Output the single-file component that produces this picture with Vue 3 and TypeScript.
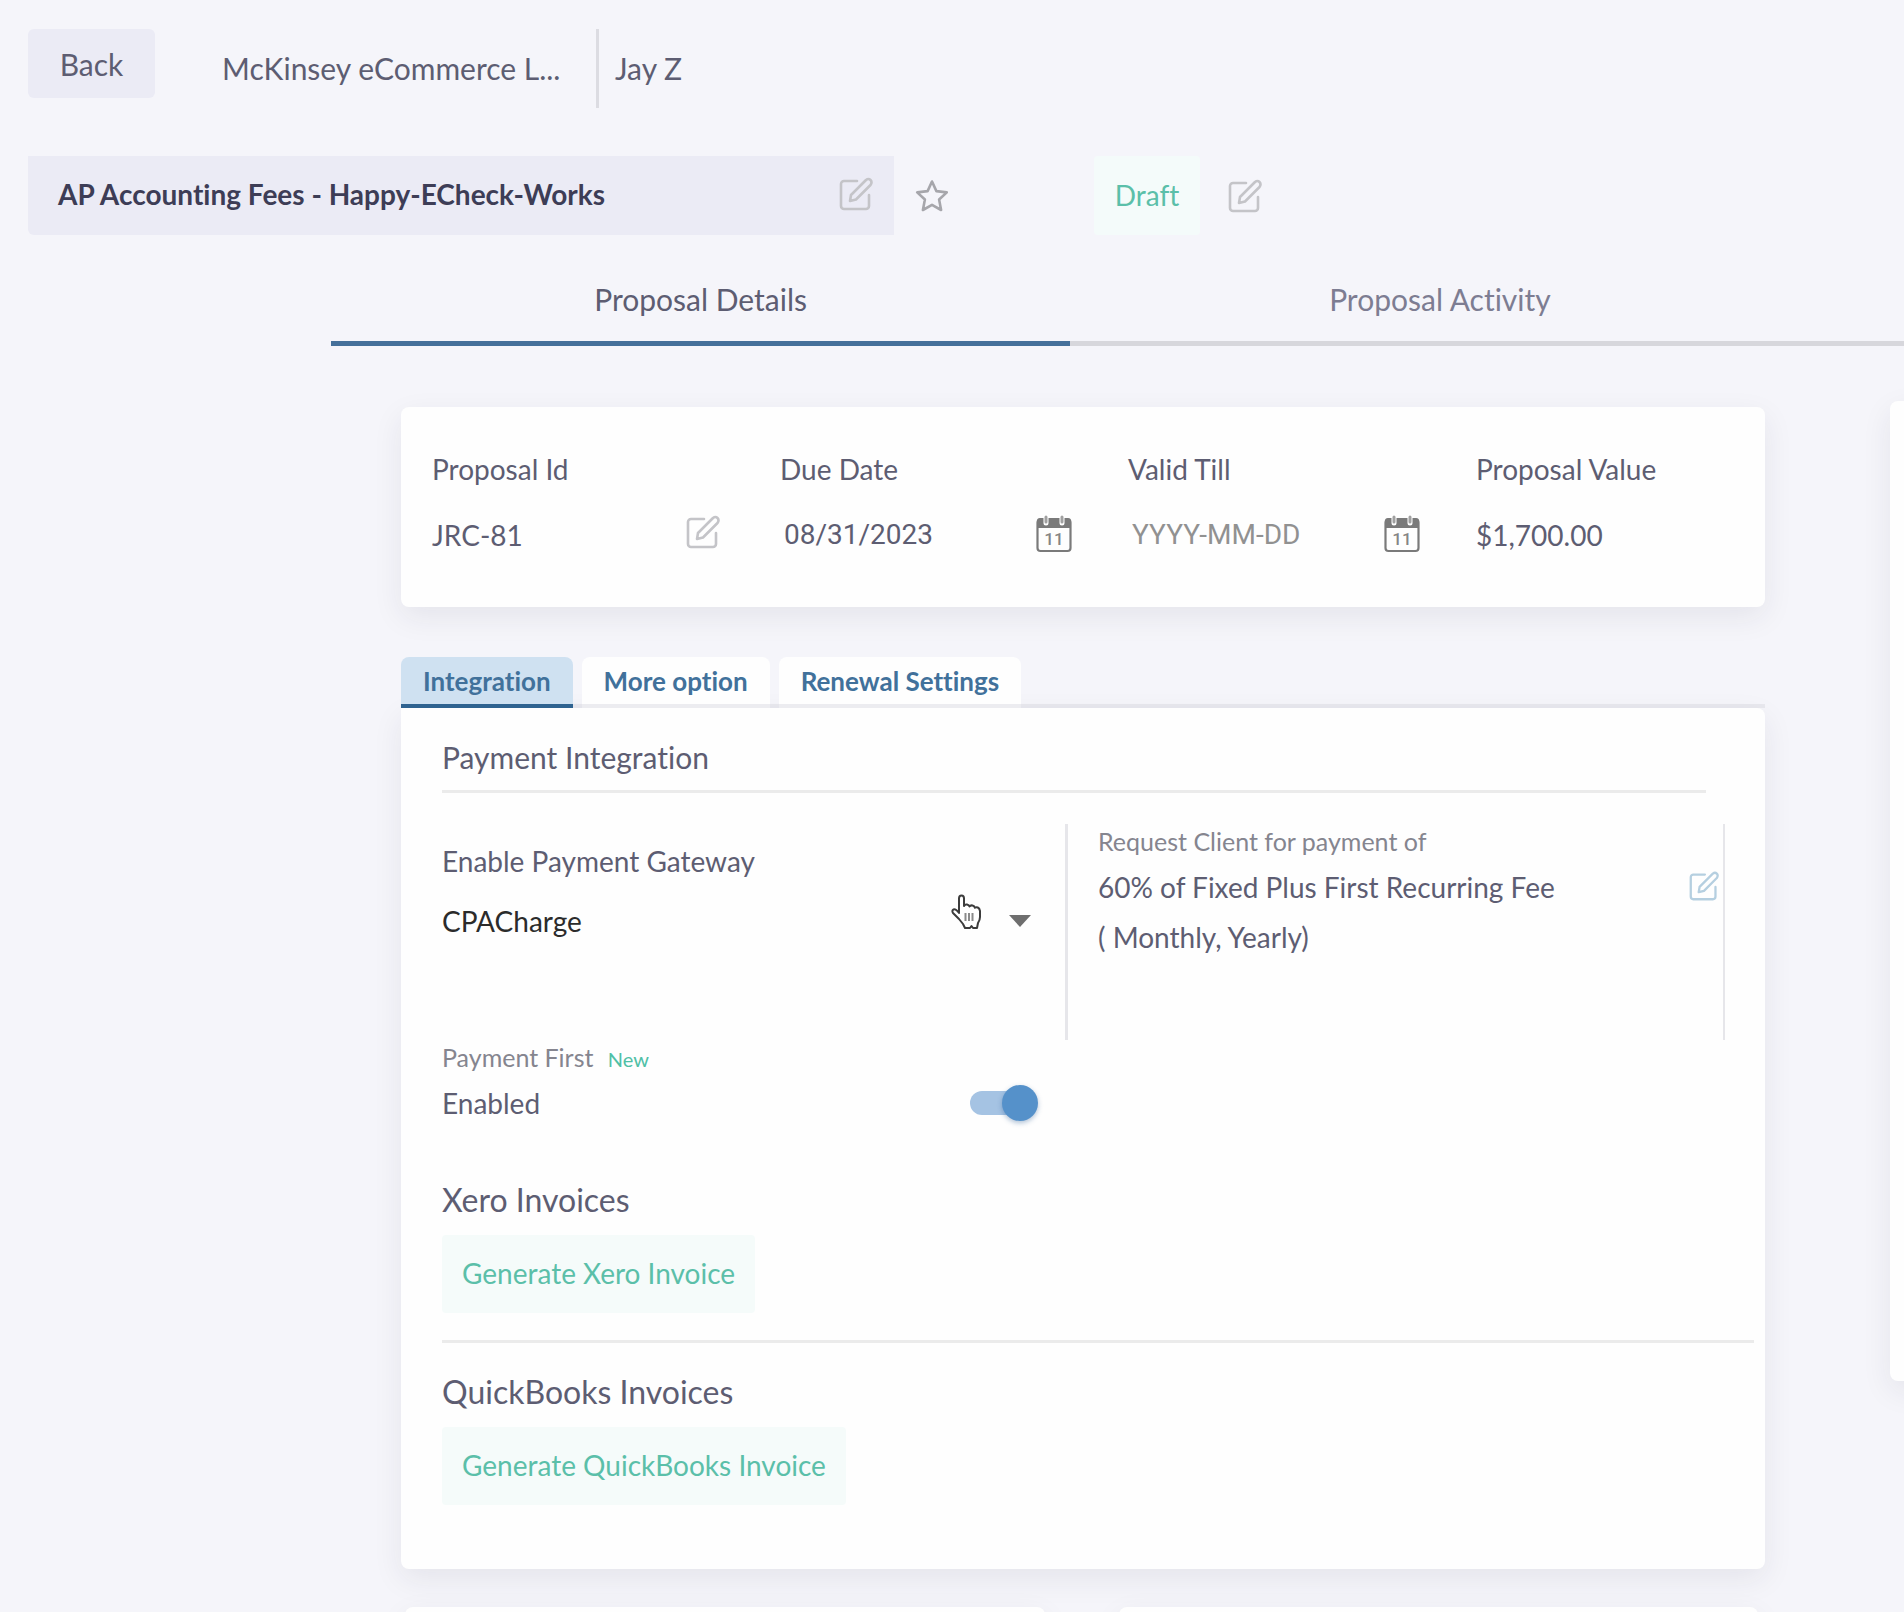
<script setup lang="ts">
import { ref } from 'vue'

interface InvoiceSection {
  title: string
  action: string
}

const mainTabs: string[] = ['Proposal Details', 'Proposal Activity']
const activeMainTab = ref<string>('Proposal Details')

const optionTabs: string[] = ['Integration', 'More option', 'Renewal Settings']
const activeOptionTab = ref<string>('Integration')

const dueDate = ref<string>('08/31/2023')
const validTill = ref<string>('')
const gateway = ref<string>('CPACharge')
const paymentFirst = ref<boolean>(true)

const invoices: InvoiceSection[] = [
  { title: 'Xero Invoices', action: 'Generate Xero Invoice' },
  { title: 'QuickBooks Invoices', action: 'Generate QuickBooks Invoice' },
]
</script>

<template>
  <div class="page">
    <!-- Shared icon shapes -->
    <svg class="sprite" aria-hidden="true">
      <symbol id="icon-edit" viewBox="0 0 34 34">
        <path
          d="M18 4H5a3 3 0 0 0-3 3v22a3 3 0 0 0 3 3h22a3 3 0 0 0 3-3V18M11 24l1-6L27 3q2.500-2 4.500 0t0 5L17 22.500z"
          fill="none" stroke="currentColor" stroke-width="2.600" stroke-linejoin="round" stroke-linecap="round"
        />
      </symbol>
      <symbol id="icon-calendar" viewBox="0 0 36 38">
        <rect x="1.500" y="4.500" width="33" height="31.500" rx="3" fill="none" stroke="currentColor" stroke-width="2.200" />
        <path d="M1 13V6q0-3 3-3h28q3 0 3 3v7z" fill="currentColor" />
        <path d="M10 1v7M26 1v7" stroke="#ffffff" stroke-width="5" stroke-linecap="round" />
        <path d="M10 2v5M26 2v5" stroke="#a0a0a0" stroke-width="3" stroke-linecap="round" />
      </symbol>
    </svg>

    <header class="top">
      <button type="button" class="back">Back</button>
      <span class="client">McKinsey eCommerce L...</span>
      <span class="contact">Jay Z</span>
    </header>

    <div class="title-row">
      <div class="title-box">
        <h1>AP Accounting Fees - Happy-ECheck-Works</h1>
        <button type="button" class="icon-btn" aria-label="Edit title">
          <svg class="edit"><use href="#icon-edit" /></svg>
        </button>
      </div>
      <button type="button" class="icon-btn star-btn" aria-label="Favourite">
        <svg class="star" viewBox="0 0 34 34">
          <path d="M17 2.500l4.400 9.600 10.400 1.300-7.700 7.100 2 10.500L17 25.900 7.900 31l2-10.500-7.700-7.100 10.400-1.300z" fill="none" stroke="currentColor" stroke-width="2.600" stroke-linejoin="round" />
        </svg>
      </button>
      <span class="status">Draft</span>
      <button type="button" class="icon-btn" aria-label="Edit status">
        <svg class="edit"><use href="#icon-edit" /></svg>
      </button>
    </div>

    <nav class="main-tabs">
      <button
        v-for="tab in mainTabs"
        :key="tab"
        type="button"
        class="main-tab"
        :class="{ active: tab === activeMainTab }"
        @click="activeMainTab = tab"
      >
        {{ tab }}
      </button>
      <span class="main-tabs-rest"></span>
    </nav>

    <div class="body">
      <main class="content">
        <section class="card facts">
          <div class="fact">
            <span class="label">Proposal Id</span>
            <div class="value id-value">
              <span>JRC-81</span>
              <button type="button" class="icon-btn" aria-label="Edit proposal id">
                <svg class="edit"><use href="#icon-edit" /></svg>
              </button>
            </div>
          </div>
          <div class="fact">
            <label class="label" for="due-date">Due Date</label>
            <div class="value">
              <input id="due-date" v-model="dueDate" type="text" class="date" />
              <svg class="calendar" viewBox="0 0 36 38">
                <use href="#icon-calendar" />
                <text x="18" y="30" text-anchor="middle">11</text>
              </svg>
            </div>
          </div>
          <div class="fact">
            <label class="label" for="valid-till">Valid Till</label>
            <div class="value">
              <input id="valid-till" v-model="validTill" type="text" class="date" placeholder="YYYY-MM-DD" />
              <svg class="calendar" viewBox="0 0 36 38">
                <use href="#icon-calendar" />
                <text x="18" y="30" text-anchor="middle">11</text>
              </svg>
            </div>
          </div>
          <div class="fact">
            <span class="label">Proposal Value</span>
            <div class="value"><span>$1,700.00</span></div>
          </div>
        </section>

        <div class="option-tabs">
          <button
            v-for="tab in optionTabs"
            :key="tab"
            type="button"
            class="option-tab"
            :class="{ active: tab === activeOptionTab }"
            @click="activeOptionTab = tab"
          >
            {{ tab }}
          </button>
        </div>

        <section class="card panel">
          <h2 class="panel-title">Payment Integration</h2>

          <div class="payment">
            <div class="gateway">
              <label class="label" for="gateway">Enable Payment Gateway</label>
              <div class="select-wrap">
                <select id="gateway" v-model="gateway">
                  <option>CPACharge</option>
                </select>
                <svg class="caret" viewBox="0 0 22 12"><path d="M0 0h22L11 12z" fill="#6e6e6e" /></svg>
                <svg class="pointer" viewBox="0 0 34 36">
                  <path
                    d="M9 19V4.500q0-3 2.500-3T14 4.500V12q1-2 3-1.500t2.500 2q1-1.500 3-1t2.300 2.200q1.200-1 3-.2T30 17v6q0 3-2 6l-1 5h-4l-1.500-2-1.500 2h-5l-2-4-4-5-6-6q-1.500-2.500.5-3.500T9 19z"
                    fill="#ffffff" stroke="#3c3c3c" stroke-width="2" stroke-linejoin="round"
                  />
                  <path d="M15.500 19v8M19 19v8M22.500 19v8" stroke="#8a8a8a" stroke-width="2" />
                </svg>
              </div>
            </div>
            <div class="request">
              <span class="hint">Request Client for payment of</span>
              <div class="request-value">
                <p>60% of Fixed Plus First Recurring Fee<br />( Monthly, Yearly)</p>
                <button type="button" class="icon-btn blue" aria-label="Edit payment request">
                  <svg class="edit small"><use href="#icon-edit" /></svg>
                </button>
              </div>
            </div>
            <div class="payment-first">
              <label class="hint" for="payment-first">Payment First <span class="new">New</span></label>
              <div class="toggle-row">
                <span>Enabled</span>
                <input id="payment-first" v-model="paymentFirst" type="checkbox" class="toggle" />
              </div>
            </div>
          </div>

          <div v-for="invoice in invoices" :key="invoice.title" class="invoice">
            <h2>{{ invoice.title }}</h2>
            <button type="button" class="generate">{{ invoice.action }}</button>
          </div>
        </section>

        <div class="next-cards">
          <section class="card"></section>
          <section class="card"></section>
        </div>
      </main>

      <aside class="card side"></aside>
    </div>
  </div>
</template>

<style>
body {
  background: #f5f5fa;
}
</style>

<style scoped>
.page {
  height: 100vh;
  overflow: hidden;
  box-sizing: border-box;
  padding-top: 29px;
  background: #f5f5fa;
  color: #5d5d72;
  font-family: Lato, "Open Sans", sans-serif;
  font-size: 28px;
  line-height: 40px;
  font-variant-ligatures: none;
}

.page * {
  box-sizing: border-box;
}

.sprite {
  position: absolute;
  width: 0;
  height: 0;
}

h1,
h2,
p {
  margin: 0;
  font-weight: 400;
}

button,
input,
select {
  padding: 0;
  border: 0;
  background: none;
  color: inherit;
  font: inherit;
  font-variant-ligatures: none;
}

svg {
  display: block;
  flex: none;
}

.card {
  border-radius: 8px;
  background: #fefefe;
  box-shadow: 0 10px 30px rgba(40, 40, 60, 0.08);
}

.icon-btn {
  display: flex;
  color: #c4c4c8;
}

.icon-btn.blue {
  color: #b5cfe0;
}

.edit {
  width: 34px;
  height: 34px;
}

.edit.small {
  width: 30px;
  height: 30px;
}

/* Header */
.top {
  display: flex;
  align-items: flex-start;
  height: 79px;
  padding-left: 28px;
  font-size: 30px;
}

.back {
  width: 127px;
  height: 69px;
  border-radius: 6px;
  background: #ebebf5;
}

.client {
  width: 374px;
  margin-left: 67px;
  line-height: 79px;
  white-space: nowrap;
}

.contact {
  padding-left: 16px;
  border-left: 3px solid #dcdce2;
  line-height: 79px;
}

/* Title */
.title-row {
  display: flex;
  align-items: center;
  height: 79px;
  margin-top: 48px;
  padding-left: 28px;
}

.title-box {
  display: flex;
  align-items: center;
  justify-content: space-between;
  width: 866px;
  height: 79px;
  padding: 0 21px 4px 30px;
  border-radius: 0 0 0 6px;
  background: #ebebf5;
}

h1 {
  color: #3d3d56;
  font-size: 28px;
  font-weight: 700;
}

.star-btn {
  margin: 0 145px 0 21px;
  color: #a6a6ab;
}

.star {
  width: 34px;
  height: 34px;
}

.status {
  width: 106px;
  margin-right: 28px;
  border-radius: 4px;
  background: #f4fbfa;
  color: #5bbfa9;
  line-height: 79px;
  text-align: center;
}

/* Main tabs */
.main-tabs {
  display: flex;
  margin-left: 331px;
}

.main-tab {
  flex: 0 0 47%;
  padding: 44px 0 22px;
  border-bottom: 5px solid #d7d7dc;
  color: #7d7d92;
  font-size: 30px;
}

.main-tab.active {
  border-color: #45709a;
  color: #5d5d72;
}

.main-tabs-rest {
  flex: 1;
  border-bottom: 5px solid #d7d7dc;
}

/* Body */
.body {
  display: flex;
  align-items: flex-start;
  gap: 125px;
  padding: 55px 0 0 401px;
}

.content {
  flex: 1;
  min-width: 0;
  padding-top: 6px;
}

.side {
  width: 380px;
  height: 980px;
  margin-right: -366px;
}

/* Proposal facts */
.facts {
  display: grid;
  grid-template-columns: repeat(3, minmax(0, 292fr)) minmax(0, 289fr);
  column-gap: 56px;
  height: 200px;
  padding: 42px 0 0 31px;
}

.label {
  display: block;
}

.value {
  display: flex;
  align-items: flex-start;
  justify-content: space-between;
  height: 40px;
  margin-top: 26px;
}

.id-value {
  padding-right: 4px;
}

.date {
  flex: 1;
  min-width: 0;
  height: 40px;
  padding-left: 4px;
  font-family: Roboto, sans-serif;
}

.date::placeholder {
  color: #919191;
  opacity: 1;
}

.calendar {
  width: 36px;
  height: 38px;
  color: #7a7a7a;
}

.calendar text {
  fill: #858585;
  font: 500 17px Roboto, sans-serif;
}

/* Option tabs */
.option-tabs {
  display: flex;
  gap: 9px;
  height: 51px;
  margin-top: 50px;
  border-bottom: 4px solid #e8e8ee;
}

.option-tab {
  height: 51px;
  padding: 0 22px;
  border-bottom: 4px solid #ececf0;
  border-radius: 8px 8px 0 0;
  background: #fefefe;
  color: #41719b;
  font-size: 26px;
  font-weight: 700;
}

.option-tab.active {
  border-color: #2f6390;
  background: #cfe1f1;
}

/* Panel */
.panel {
  padding: 29px 0 64px 41px;
  border-radius: 0 8px 8px 8px;
}

.panel-title {
  margin-right: 59px;
  padding-bottom: 13px;
  border-bottom: 3px solid #ebebeb;
  font-size: 30px;
}

.payment {
  display: grid;
  grid-template-columns: 623fr 660fr;
  margin: 31px 40px 0 0;
}

.gateway {
  padding: 17px 27px 0 0;
}

.select-wrap {
  position: relative;
  display: flex;
  align-items: center;
  margin-top: 20px;
}

select {
  width: 100%;
  height: 40px;
  appearance: none;
  color: #2b2b2b;
}

.caret {
  position: absolute;
  right: 7px;
  width: 22px;
  height: 12px;
  pointer-events: none;
}

.pointer {
  position: absolute;
  right: 54px;
  bottom: 11px;
  width: 34px;
  height: 36px;
  pointer-events: none;
}

.request {
  height: 216px;
  padding-left: 30px;
  border: solid #e6e6ea;
  border-width: 0 2px 0 3px;
}

.hint {
  display: block;
  color: #85858f;
  font-size: 25px;
  line-height: 34px;
}

.request-value {
  display: flex;
  align-items: flex-start;
  justify-content: space-between;
  padding: 4px 4px 0 0;
  line-height: 50px;
}

.request-value .icon-btn {
  margin-top: 9px;
}

.new {
  margin-left: 8px;
  color: #4fc0a6;
  font-size: 20px;
  line-height: 20px;
}

.toggle-row {
  display: flex;
  align-items: center;
  justify-content: space-between;
  height: 40px;
  margin: 9px 27px 0 0;
}

.toggle {
  position: relative;
  width: 68px;
  height: 36px;
  margin: 0;
  appearance: none;
}

.toggle::before {
  content: "";
  position: absolute;
  inset: 6px 8px 6px 0;
  border-radius: 12px;
  background: #c4c4c8;
}

.toggle::after {
  content: "";
  position: absolute;
  left: 0;
  width: 36px;
  height: 36px;
  border-radius: 50%;
  background: #f4f4f4;
  box-shadow: 0 2px 5px rgba(30, 80, 140, 0.35);
}

.toggle:checked::before {
  background: #a5c3e3;
}

.toggle:checked::after {
  left: 32px;
  background: #5591ca;
}

.invoice {
  margin-right: 11px;
  padding-top: 29px;
  border-top: 3px solid #ebebeb;
}

.payment + .invoice {
  padding: 57px 0 27px;
  border-top: 0;
}

.invoice h2 {
  font-size: 32px;
}

.generate {
  height: 78px;
  margin-top: 15px;
  padding: 0 20px 2px;
  border-radius: 4px;
  background: #f5fbfa;
  color: #5bbfa9;
}

/* Following cards */
.next-cards {
  display: grid;
  grid-template-columns: 1fr 1fr;
  gap: 74px;
  margin: 38px 7px 0 4px;
}

.next-cards .card {
  height: 120px;
}
</style>
